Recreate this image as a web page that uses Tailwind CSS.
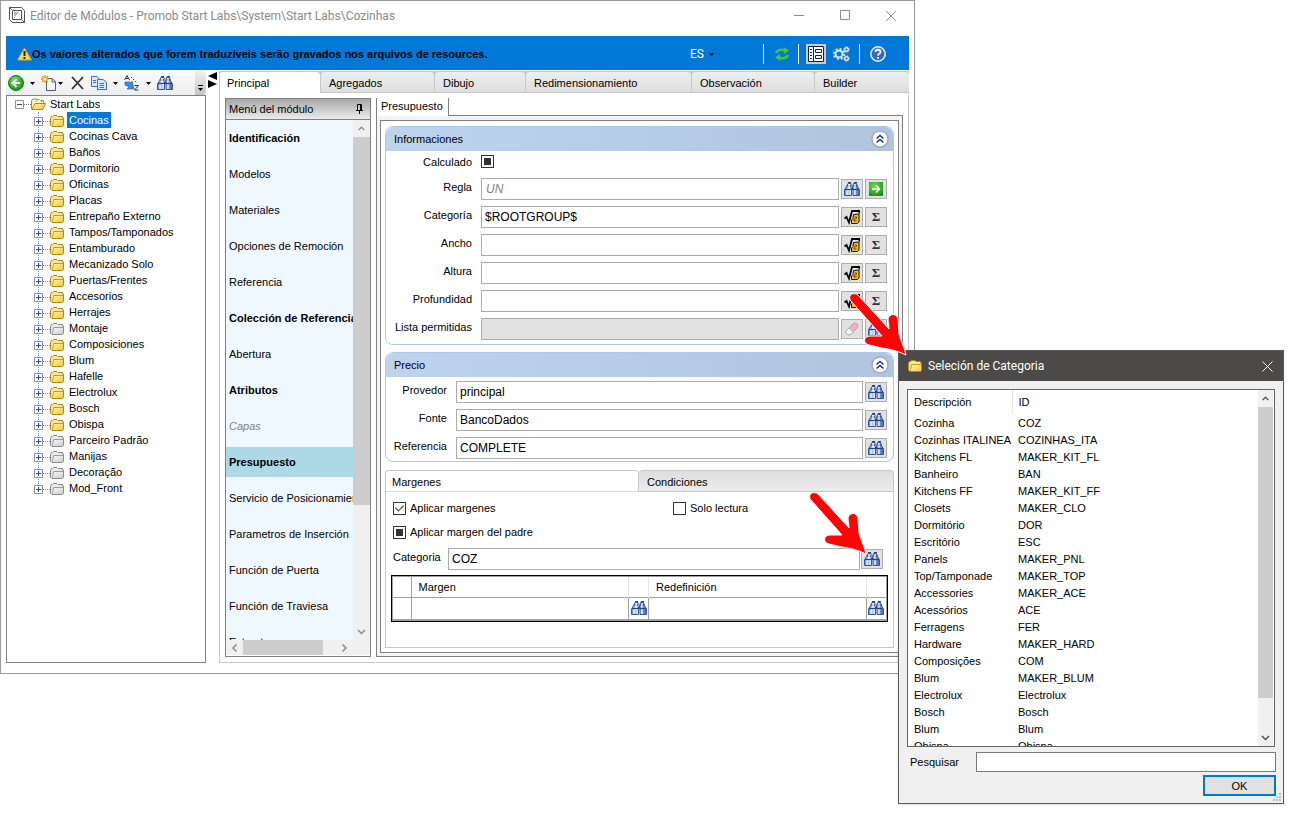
<!DOCTYPE html>
<html lang="es">
<head>
    <meta charset="UTF-8">
    <meta name="viewport" content="width=device-width, initial-scale=1.0">
    <title>Editor de Módulos</title>
    <script src="https://cdn.jsdelivr.net/npm/@tailwindcss/browser@4"></script>
</head>
<body class="relative min-h-screen overflow-hidden bg-white font-['Liberation_Sans',Arial,sans-serif] text-[11px] leading-4 text-black">

    <!-- Iconos -->
    <svg class="absolute h-0 w-0">
        <defs>
            <linearGradient id="gFolder" x1="0" y1="0" x2="1" y2="1">
                <stop offset="0" stop-color="#fff6a0"/><stop offset="1" stop-color="#f8c14e"/>
            </linearGradient>
            <linearGradient id="gGray" x1="0" y1="0" x2="1" y2="1">
                <stop offset="0" stop-color="#f4f4f4"/><stop offset="1" stop-color="#cfcfcf"/>
            </linearGradient>
            <linearGradient id="gBlue" x1="0" y1="0" x2="1" y2="0">
                <stop offset="0" stop-color="#5f86c8"/><stop offset=".4" stop-color="#dbe7f8"/><stop offset="1" stop-color="#3a5fa6"/>
            </linearGradient>
            <radialGradient id="gGreen" cx=".4" cy=".3" r=".8">
                <stop offset="0" stop-color="#6fdc5a"/><stop offset="1" stop-color="#138a12"/>
            </radialGradient>
        </defs>
        <symbol id="folder" viewBox="0 0 14 12">
            <path d="M.5 10V3L1.500 1.500H2.500L3.500 .5H7L8 1.500H12.500V3H13.500V10.500L12.500 11.500H2Z" fill="#fbe98a" stroke="#b58a10"/>
            <path d="M3.500 4.500H13M3.500 4.500L2.500 10.500" stroke="#c79a1c" fill="none"/>
            <rect x="4" y="5" width="9" height="6" fill="url(#gFolder)"/>
        </symbol>
        <symbol id="folder-gray" viewBox="0 0 14 12">
            <path d="M.5 10V3L1.500 1.500H2.500L3.500 .5H7L8 1.500H12.500V3H13.500V10.500L12.500 11.500H2Z" fill="#e9e9e9" stroke="#8c8c8c"/>
            <path d="M3.500 4.500H13M3.500 4.500L2.500 10.500" stroke="#9a9a9a" fill="none"/>
            <rect x="4" y="5" width="9" height="6" fill="url(#gGray)"/>
        </symbol>
        <symbol id="binoculars" viewBox="0 0 16 14">
            <path d="M4 1.500H7V5L7.500 8V13.500H.5V8L2.500 4.500ZM9.500 1.500H12.500L13.500 4.500L15.500 8V13.500H9V8L8.500 5Z" fill="url(#gBlue)" stroke="#34589c"/>
            <path d="M4 .5H7M10 .5H13M3 4H7M9 4H13.500M1 7.500H7M9 7.500H15" stroke="#24437f"/>
            <path d="M7 7H9.500" stroke="#24437f" stroke-width="2"/>
            <path d="M3 8.500V13M11 8.500V13M5 2V6.500M11 2V6.500" stroke="#fff" stroke-width="1.200"/>
        </symbol>
        <symbol id="root" viewBox="0 0 16 16">
            <path d="M.5 9.500L2.500 8L5 13.500L8 2H15.500V4.500" fill="none" stroke="#000" stroke-width="1.800"/>
            <path d="M9.500 5.500L15 5V13L13.500 14.500H7.500V11L9 9.500Z" fill="#f9b81c" stroke="#000" stroke-width=".9"/>
            <path d="M10.500 8H12.500V9.500L10 10.500V12H12.500" fill="none" stroke="#5a3c00" stroke-width=".9"/>
        </symbol>
        <symbol id="chevrons" viewBox="0 0 18 18">
            <circle cx="9" cy="9" r="8" fill="#fff" stroke="#a3a8bd" stroke-width="1.500"/>
            <path d="M5.500 8.500L9 5.500L12.500 8.500M5.500 12.500L9 9.500L12.500 12.500" fill="none" stroke="#1d2f6b" stroke-width="1.500"/>
        </symbol>
        <symbol id="caret" viewBox="0 0 5 3"><path d="M0 0H5L2.500 3Z" fill="#000"/></symbol>
        <symbol id="chev" viewBox="0 0 9 6"><path d="M1 5L4.500 1.500L8 5" fill="none" stroke="currentColor" stroke-width="1.500"/></symbol>
        <symbol id="pointer" viewBox="0 0 64 68">
            <path d="M2 9C0 3 6 1 10 4L41 38C41 34 40 31 40 28C41 22 49 22 50 28L51 43C53 51 57 58 58 64C50 60 42 58 34 57L21 54C14 52 16 45 22 45H34Z" fill="#fe0505" stroke="#fff"/>
        </symbol>
    </svg>

    <!-- Ventana principal -->
    <main class="mr-[387px] border border-[#9b9b9b] bg-white px-[5px] pb-[10px]">
        <header class="flex h-[35px] items-start pl-[3px] pt-[6px] font-[Roboto,'Open_Sans',sans-serif] text-[12px] leading-[18px] text-[#8a8a8a]">
            <svg class="mr-[5px] size-4" viewBox="0 0 16 16" fill="none" stroke="#555">
                <path d="M.5 .5H12.500L15.500 3.500V15.500H3.500L.5 12.500Z"/><path d="M3.500 3.500H12.500V12.500H3.500ZM.5 .5L3.500 3.500M12.500 12.500L15.500 15.500"/><path d="M5 5H10L5 11Z" fill="#b9b9b9" stroke="none"/>
            </svg>
            <h1 class="grow whitespace-nowrap">Editor de Módulos - Promob Start Labs\System\Start Labs\Cozinhas</h1>
            <div class="flex gap-[34px] pr-[12px] pt-[3px]">
                <button type="button" aria-label="Minimizar"><svg class="h-[12px] w-[12px]" viewBox="0 0 12 12" stroke="#8a8a8a"><path d="M1 5.500H11"/></svg></button>
                <button type="button" aria-label="Maximizar"><svg class="h-[12px] w-[12px]" viewBox="0 0 12 12" fill="none" stroke="#8a8a8a"><path d="M1.500 .5H10.500V9.500H1.500Z"/></svg></button>
                <button type="button" aria-label="Cerrar"><svg class="h-[12px] w-[12px]" viewBox="0 0 12 12" stroke="#8a8a8a"><path d="M1 1L11 11M11 1L1 11"/></svg></button>
            </div>
        </header>

        <!-- Barra de aviso -->
        <div class="flex h-[34px] items-center bg-[#0078d7] pl-[11px] pr-[23px] pt-[2px]">
            <svg class="h-[14px] w-[15px] shrink-0" viewBox="0 0 15 14">
                <path d="M7.500 1L14.500 13H.5Z" fill="#fbd84b" stroke="#c4a545"/>
                <path d="M7.500 4V9" stroke="#222" stroke-width="2"/><path d="M7.500 10V12" stroke="#222" stroke-width="2"/>
            </svg>
            <p class="grow whitespace-nowrap font-bold">Os valores alterados que forem traduzíveis serão gravados nos arquivos de resources.</p>
            <div class="mr-[49px] flex items-center gap-[4px]">
                <select aria-label="Idioma" class="w-[15px] appearance-none font-[Roboto,sans-serif] text-[12px] text-white">
                    <option>ES</option>
                </select>
                <svg class="h-[3px] w-[5px]"><use href="#caret"/></svg>
            </div>
            <span class="mr-[10px] h-[20px] w-px bg-white"></span>
            <button type="button" class="mr-[8px]" aria-label="Actualizar">
                <svg class="size-4" viewBox="0 0 16 16" fill="none" stroke="#49c42c" stroke-width="2.500">
                    <path d="M2 7C3 4 7 3 11 4.500"/><path d="M9.500 1L15 4.500L10 8Z" fill="#49c42c" stroke="none"/>
                    <path d="M14 9C13 12 9 13 5 11.500"/><path d="M6.500 15L1 11.500L6 8Z" fill="#49c42c" stroke="none"/>
                </svg>
            </button>
            <span class="mr-[7px] h-[20px] w-px bg-white"></span>
            <button type="button" class="mr-[7px] grid size-[20px] place-items-center bg-[#c5cbd8]" aria-label="Vista">
                <svg class="size-4" viewBox="0 0 16 16" fill="none" stroke="#222">
                    <path d="M.5 .5H15.500V15.500H.5Z" fill="#fff"/><path d="M5.500 .5V15.500M2 3.500H4M2 6.500H4M2 9.500H4M2 12.500H4M7.500 3.500H13.500V6.500H7.500ZM7.500 9.500H13.500V12.500H7.500Z"/>
                </svg>
            </button>
            <button type="button" class="mr-[9px]" aria-label="Opciones">
                <svg class="h-[16px] w-[17px]" viewBox="0 0 17 16" fill="none" stroke="#dfe6ee">
                    <circle cx="6" cy="8" r="3.500" stroke-width="2"/><circle cx="6" cy="8" r="5.200" stroke-width="1.800" stroke-dasharray="2 2.080"/>
                    <circle cx="13.500" cy="3.500" r="1.800" stroke-width="1.400"/><circle cx="13.500" cy="3.500" r="2.800" stroke-dasharray="1 1.200"/>
                    <circle cx="13.500" cy="12.500" r="1.800" stroke-width="1.400"/><circle cx="13.500" cy="12.500" r="2.800" stroke-dasharray="1 1.200"/>
                </svg>
            </button>
            <span class="mr-[10px] h-[20px] w-px bg-white"></span>
            <button type="button" aria-label="Ayuda">
                <svg class="size-4" viewBox="0 0 16 16" fill="none">
                    <circle cx="8" cy="8" r="7.200" fill="#3668c9" stroke="#eef3ff" stroke-width="1.500"/>
                    <path d="M5.500 6C5.500 3 10.500 3 10.500 6C10.500 7.500 8 7.800 8 9.500M8 11V12.800" stroke="#fff" stroke-width="1.800"/>
                </svg>
            </button>
        </div>

        <div class="flex pt-px">
            <!-- Columna del árbol -->
            <aside class="flex w-[200px] shrink-0 flex-col">
                <div class="flex h-[24px] items-center rounded-r bg-linear-to-b from-[#fafafa] to-[#eeeeee] pl-[2px]">
                    <button type="button" aria-label="Volver">
                        <svg class="size-4" viewBox="0 0 16 16"><circle cx="8" cy="8" r="7.500" fill="url(#gGreen)" stroke="#0f7a10"/><path d="M8.500 4L4.500 8L8.500 12M5 8H12" fill="none" stroke="#fff" stroke-width="2"/></svg>
                    </button>
                    <svg class="mx-[6px] h-[3px] w-[5px]"><use href="#caret"/></svg>
                    <button type="button" aria-label="Nuevo">
                        <svg class="size-4" viewBox="0 0 16 16"><path d="M5.500 3.500H11L14.500 6.500V15.500H5.500Z" fill="#f4f8ff" stroke="#4a5f86"/><path d="M11 3.500V7H14.500" fill="none" stroke="#4a5f86"/><path d="M4 0V8M0 4H8M1 1L7 7M7 1L1 7" stroke="#e59a15" stroke-width="1.300"/><circle cx="4" cy="4" r="1.600" fill="#fff3b0"/></svg>
                    </button>
                    <svg class="ml-px mr-[8px] h-[3px] w-[5px]"><use href="#caret"/></svg>
                    <button type="button" aria-label="Eliminar">
                        <svg class="h-[14px] w-[13px]" viewBox="0 0 13 14" stroke="#333" stroke-width="1.800" fill="none"><path d="M1 1L12 13M12 1L1 13"/></svg>
                    </button>
                    <button type="button" class="ml-[7px]" aria-label="Copiar">
                        <svg class="size-4" viewBox="0 0 16 16" fill="#dbe8fb" stroke="#3f6db8"><path d="M.5 1.500H6L8.500 4V11.500H.5Z"/><path d="M6.500 4.500H12L15.500 7.500V14.500H6.500Z"/><path d="M2 5.500H5M2 7.500H5M8.500 8.500H13M8.500 10.500H13M8.500 12.500H13"/></svg>
                    </button>
                    <svg class="mx-[6px] h-[3px] w-[5px]"><use href="#caret"/></svg>
                    <button type="button" aria-label="Ordenar">
                        <svg class="size-4" viewBox="0 0 16 16" fill="none" stroke="#333"><path d="M.5 5L3 0.500L5.500 5M1.500 3.500H4.500M10.500 10.500H14.500L10.500 15H14.500"/><path d="M7 2L12 7" stroke-dasharray="1.500 1.500"/><path d="M1 7H6L8 8V6L10 14H3L5 12L1 10Z" fill="#3c8ddb" stroke="#1f5ca8" stroke-width=".6"/></svg>
                    </button>
                    <svg class="mx-[6px] h-[3px] w-[5px]"><use href="#caret"/></svg>
                    <button type="button" aria-label="Buscar"><svg class="h-[14px] w-4"><use href="#binoculars"/></svg></button>
                    <button type="button" class="ml-auto grid h-[24px] w-[11px] place-items-end justify-center rounded-r bg-linear-to-b from-[#f0f0f0] to-[#c4c4c4] pb-[4px]" aria-label="Más">
                        <svg class="h-[6px] w-[5px]" viewBox="0 0 5 6"><path d="M0 .5H5" stroke="#000"/><path d="M0 3H5L2.500 6Z"/></svg>
                    </button>
                </div>
                <div class="grow border border-[#7d8290]">
                    <div class="flex h-4 items-center pl-2">
                        <svg class="h-[9px] w-[9px]" viewBox="0 0 9 9"><path d="M.5 .5H8.500V8.500H.5Z" fill="#fff" stroke="#919191"/><path d="M2 4.500H7" stroke="#2b4b9b"/></svg>
                        <span class="w-[7px] border-t border-dotted border-[#808080]"></span>
                        <svg class="mr-[4px] h-[12px] w-[15px]" viewBox="0 0 15 12"><path d="M.5 11V2.500L2 1H6L7 2.500H12.500V5" fill="#fff3b5" stroke="#b58a10"/><path d="M5 4L8 1L11 4" fill="#fff" stroke="#9aa3b5"/><path d="M1 11.500L4 5.500H14.500L12 11.500Z" fill="url(#gFolder)" stroke="#b58a10"/></svg>
                        <span>Start Labs</span>
                    </div>
                    <ul id="tree" class="relative before:absolute before:bottom-2 before:left-[31px] before:top-0 before:border-l before:border-dotted before:border-[#808080]"></ul>
                </div>
            </aside>

            <div class="flex w-[13px] shrink-0 flex-col items-center pt-px">
                <svg class="h-[8px] w-[9px]" viewBox="0 0 9 8"><path d="M9 0V8L0 4Z"/></svg>
                <svg class="h-[8px] w-[9px]" viewBox="0 0 9 8"><path d="M0 0V8L9 4Z"/></svg>
            </div>

            <section class="min-w-0 grow">
                <!-- Pestañas -->
                <nav class="flex h-[22px] gap-px bg-[#c8c8c8] leading-[22px]">
                    <a href="#" class="w-[101px] rounded-t-sm border-l border-t border-[#c8c8c8] bg-white pl-[7px]">Principal</a>
                    <a href="#" class="w-[113px] rounded-t-sm border-b border-t border-[#c8c8c8] bg-linear-to-b from-[#eeeeee] to-[#dedede] pl-[8px]">Agregados</a>
                    <a href="#" class="w-[90px] rounded-t-sm border-b border-t border-[#c8c8c8] bg-linear-to-b from-[#eeeeee] to-[#dedede] pl-[8px]">Dibujo</a>
                    <a href="#" class="w-[165px] rounded-t-sm border-b border-t border-[#c8c8c8] bg-linear-to-b from-[#eeeeee] to-[#dedede] pl-[8px]">Redimensionamiento</a>
                    <a href="#" class="w-[122px] rounded-t-sm border-b border-t border-[#c8c8c8] bg-linear-to-b from-[#eeeeee] to-[#dedede] pl-[8px]">Observación</a>
                    <a href="#" class="grow rounded-t-sm border-b border-t border-[#c8c8c8] bg-linear-to-b from-[#eeeeee] to-[#dedede] pl-[8px]">Builder</a>
                </nav>

                <div class="flex gap-[5px] border border-t-0 border-[#c8c8c8] p-[5px]">
                    <!-- Menú del módulo -->
                    <div class="w-[146px] shrink-0 border border-[#808080]">
                        <div class="flex h-[21px] items-center justify-between border-b border-[#808080] bg-linear-to-b from-[#a8a8a8] to-[#ececec] pl-[3px] pr-[7px]">
                            <span>Menú del módulo</span>
                            <svg class="h-[10px] w-[7px]" viewBox="0 0 7 10"><path d="M1.500 6V.5H5.500V6M0 6.500H7M3.500 7V10" fill="none" stroke="#000"/><path d="M4 1H6V6H4Z"/></svg>
                        </div>
                        <div class="grid grid-cols-[1fr_17px]">
                            <ul id="menu" class="h-[520px] overflow-hidden whitespace-nowrap bg-[#f0f8ff]"></ul>
                            <div class="flex flex-col items-center bg-[#f0f0f0] text-[#8a8a8a]">
                                <svg class="my-[6px] h-[5px] w-[9px] shrink-0"><use href="#chev"/></svg>
                                <div class="h-[368px] w-full bg-[#cdcdcd]"></div>
                                <svg class="mb-[5px] mt-auto h-[6px] w-[9px] rotate-180"><use href="#chev"/></svg>
                            </div>
                            <div class="flex h-[15px] items-center bg-[#f0f0f0] text-[#8a8a8a]">
                                <svg class="mx-[4px] h-[6px] w-[9px] -rotate-90"><use href="#chev"/></svg>
                                <div class="h-full w-[80px] bg-[#cdcdcd]"></div>
                                <svg class="ml-auto mr-[4px] h-[6px] w-[9px] rotate-90"><use href="#chev"/></svg>
                            </div>
                            <div class="bg-[#f0f0f0]"></div>
                        </div>
                    </div>

                    <!-- Presupuesto -->
                    <div class="flex min-w-0 grow flex-col">
                        <div class="flex h-[18px]">
                            <a href="#" class="w-[73px] border-x border-[#808080] pl-[4px]">Presupuesto</a>
                            <span class="grow border-b border-[#808080]"></span>
                        </div>
                        <div class="grow border border-t-0 border-[#808080] bg-[#f3f3f3] p-[3px] pt-[4px]">
                            <div class="h-full border border-[#808080] bg-white p-[4px] pt-[5px]">

                                <fieldset class="mb-[7px] overflow-hidden rounded-lg border border-[#a9cbe9]">
                                    <div class="flex h-[24px] items-center justify-between bg-linear-to-r from-[#bdd3ee] to-[#b0c4de] pl-[8px] pr-[4px]">
                                        <h2>Informaciones</h2>
                                        <button type="button" aria-label="Contraer"><svg class="size-[18px]"><use href="#chevrons"/></svg></button>
                                    </div>
                                    <div class="grid grid-cols-[86px_1fr_22px_22px] gap-x-[2px] gap-y-[6px] pb-[4px] pr-[6px]">
                                        <label for="calc" class="pt-[3px] text-right">Calculado</label>
                                        <div class="col-span-3 flex h-[21px] items-center pl-[7px]">
                                            <input id="calc" type="checkbox" class="grid size-[13px] appearance-none place-items-center border border-[#333] bg-white before:size-[7px] before:bg-[#333]">
                                        </div>

                                        <label for="regla" class="pt-px text-right">Regla</label>
                                        <div class="pl-[7px]"><input id="regla" type="text" value="UN" class="h-[22px] w-full border border-[#ababab] px-[4px] text-[12px] italic text-[#808080]"></div>
                                        <button type="button" aria-label="Buscar regla" class="grid h-[20px] place-items-center self-center border border-[#adadad] bg-[#e1e1e1]"><svg class="h-[14px] w-4"><use href="#binoculars"/></svg></button>
                                        <button type="button" aria-label="Ir" class="grid h-[20px] place-items-center self-center border border-[#adadad] bg-[#e1e1e1]">
                                            <svg class="size-[14px]" viewBox="0 0 14 14"><path d="M0 0H14V14H0Z" fill="url(#gGreen)"/><path d="M3 7H10.500M7 3.500L10.500 7L7 10.500" fill="none" stroke="#fff" stroke-width="1.500"/></svg>
                                        </button>

                                        <label for="cat" class="pt-px text-right">Categoría</label>
                                        <div class="pl-[7px]"><input id="cat" type="text" value="$ROOTGROUP$" class="h-[22px] w-full border border-[#ababab] px-[3px] text-[12px]"></div>
                                        <button type="button" aria-label="Fórmula" class="grid h-[20px] place-items-center self-center border border-[#adadad] bg-[#e1e1e1]"><svg class="size-4"><use href="#root"/></svg></button>
                                        <button type="button" class="h-[20px] self-center border border-[#adadad] bg-[#e1e1e1] font-['Liberation_Serif',serif] text-[13px] font-bold text-[#333]">Σ</button>

                                        <label for="ancho" class="pt-px text-right">Ancho</label>
                                        <div class="pl-[7px]"><input id="ancho" type="text" class="h-[22px] w-full border border-[#ababab] px-[3px] text-[12px]"></div>
                                        <button type="button" aria-label="Fórmula" class="grid h-[20px] place-items-center self-center border border-[#adadad] bg-[#e1e1e1]"><svg class="size-4"><use href="#root"/></svg></button>
                                        <button type="button" class="h-[20px] self-center border border-[#adadad] bg-[#e1e1e1] font-['Liberation_Serif',serif] text-[13px] font-bold text-[#333]">Σ</button>

                                        <label for="altura" class="pt-px text-right">Altura</label>
                                        <div class="pl-[7px]"><input id="altura" type="text" class="h-[22px] w-full border border-[#ababab] px-[3px] text-[12px]"></div>
                                        <button type="button" aria-label="Fórmula" class="grid h-[20px] place-items-center self-center border border-[#adadad] bg-[#e1e1e1]"><svg class="size-4"><use href="#root"/></svg></button>
                                        <button type="button" class="h-[20px] self-center border border-[#adadad] bg-[#e1e1e1] font-['Liberation_Serif',serif] text-[13px] font-bold text-[#333]">Σ</button>

                                        <label for="prof" class="pt-px text-right">Profundidad</label>
                                        <div class="pl-[7px]"><input id="prof" type="text" class="h-[22px] w-full border border-[#ababab] px-[3px] text-[12px]"></div>
                                        <button type="button" aria-label="Fórmula" class="grid h-[20px] place-items-center self-center border border-[#adadad] bg-[#e1e1e1]"><svg class="size-4"><use href="#root"/></svg></button>
                                        <button type="button" class="h-[20px] self-center border border-[#adadad] bg-[#e1e1e1] font-['Liberation_Serif',serif] text-[13px] font-bold text-[#333]">Σ</button>

                                        <label for="lista" class="whitespace-nowrap pt-px text-right">Lista permitidas</label>
                                        <div class="pl-[7px]"><input id="lista" type="text" disabled class="h-[22px] w-full border border-[#ababab] bg-[#e1e1e1]"></div>
                                        <button type="button" aria-label="Borrar" class="grid h-[20px] place-items-center self-center border border-[#adadad] bg-[#e1e1e1]">
                                            <svg class="size-[14px]" viewBox="0 0 14 14"><path d="M1 9L8 2Q10 0 12 2Q14 4 12 6L5.500 12.500Q4 13.500 2 12Q0 10.500 1 9Z" fill="#f2b3bb" stroke="#b9a0a5"/><path d="M1 9L4 6L8.500 10L5.500 12.500Q4 13.500 2 12Q0 10.500 1 9Z" fill="#fff" stroke="#aaa"/></svg>
                                        </button>
                                        <button type="button" aria-label="Buscar lista" class="grid h-[20px] place-items-center self-center border border-[#adadad] bg-[#e1e1e1]"><svg class="h-[14px] w-4"><use href="#binoculars"/></svg></button>
                                    </div>
                                </fieldset>

                                <fieldset class="mb-[8px] overflow-hidden rounded-lg border border-[#a9cbe9]">
                                    <div class="flex h-[24px] items-center justify-between bg-linear-to-r from-[#bdd3ee] to-[#b0c4de] pl-[8px] pr-[4px]">
                                        <h2>Precio</h2>
                                        <button type="button" aria-label="Contraer"><svg class="size-[18px]"><use href="#chevrons"/></svg></button>
                                    </div>
                                    <div class="grid grid-cols-[61px_1fr_22px] gap-x-[2px] gap-y-[6px] pb-[2px] pr-[6px] pt-[4px]">
                                        <label for="prov" class="pt-px text-right">Provedor</label>
                                        <div class="pl-[7px]"><input id="prov" type="text" value="principal" class="h-[22px] w-full border border-[#ababab] px-[3px] text-[12px]"></div>
                                        <button type="button" aria-label="Buscar proveedor" class="grid h-[20px] place-items-center self-center border border-[#adadad] bg-[#e1e1e1]"><svg class="h-[14px] w-4"><use href="#binoculars"/></svg></button>
                                        <label for="fonte" class="pt-px text-right">Fonte</label>
                                        <div class="pl-[7px]"><input id="fonte" type="text" value="BancoDados" class="h-[22px] w-full border border-[#ababab] px-[3px] text-[12px]"></div>
                                        <button type="button" aria-label="Buscar fuente" class="grid h-[20px] place-items-center self-center border border-[#adadad] bg-[#e1e1e1]"><svg class="h-[14px] w-4"><use href="#binoculars"/></svg></button>
                                        <label for="ref" class="pt-px text-right">Referencia</label>
                                        <div class="pl-[7px]"><input id="ref" type="text" value="COMPLETE" class="h-[22px] w-full border border-[#ababab] px-[3px] text-[12px]"></div>
                                        <button type="button" aria-label="Buscar referencia" class="grid h-[20px] place-items-center self-center border border-[#adadad] bg-[#e1e1e1]"><svg class="h-[14px] w-4"><use href="#binoculars"/></svg></button>
                                    </div>
                                </fieldset>

                                <!-- Margenes / Condiciones -->
                                <div class="flex h-[22px] leading-[22px]">
                                    <a href="#" class="flex-1 rounded-t border border-b-[#dcdcdc] border-[#c8c8c8] pl-[6px]">Margenes</a>
                                    <a href="#" class="flex-1 rounded-t border border-l-0 border-[#c8c8c8] bg-linear-to-b from-[#dedede] to-[#ececec] pl-[8px]">Condiciones</a>
                                </div>
                                <div class="border border-t-0 border-[#c8c8c8] px-[5px] pb-[25px] pt-[4px]">
                                    <div class="grid grid-cols-[280px_1fr] pl-[2px]">
                                        <label class="flex h-[24px] items-center gap-[4px]">
                                            <input type="checkbox" checked class="flex size-[13px] appearance-none justify-center border border-[#333] bg-white before:h-[8px] before:w-[5px] before:rotate-45 before:border-b before:border-r before:border-[#333]">Aplicar margenes
                                        </label>
                                        <label class="flex h-[24px] items-center gap-[4px]">
                                            <input type="checkbox" class="size-[13px] appearance-none border border-[#333] bg-white">Solo lectura
                                        </label>
                                        <label class="flex h-[24px] items-center gap-[4px]">
                                            <input type="checkbox" class="grid size-[13px] appearance-none place-items-center border border-[#333] bg-white before:size-[7px] before:bg-[#333]">Aplicar margen del padre
                                        </label>
                                    </div>
                                    <div class="mb-[5px] mt-[4px] flex pl-[2px] pr-[5px]">
                                        <label for="mcat" class="w-[55px] shrink-0 pt-px">Categoria</label>
                                        <input id="mcat" type="text" value="COZ" class="mr-px h-[22px] min-w-0 grow border border-[#ababab] px-[3px] text-[12px]">
                                        <button type="button" aria-label="Buscar categoria" class="grid h-[20px] w-[22px] place-items-center self-center border border-[#adadad] bg-[#e1e1e1]"><svg class="h-[14px] w-4"><use href="#binoculars"/></svg></button>
                                    </div>
                                    <div class="border border-black bg-[#a0a0a0] p-px pb-[2px]">
                                        <table class="w-full table-fixed border-collapse bg-white text-left">
                                            <colgroup><col class="w-[18px]"><col><col class="w-[20px]"><col><col class="w-[20px]"></colgroup>
                                            <thead>
                                                <tr class="h-[20px]">
                                                    <th class="border-r border-[#a0a0a0]"></th>
                                                    <th class="pl-[7px] font-normal">Margen</th>
                                                    <th class="border-x border-[#e5e5e5]"></th>
                                                    <th class="pl-[7px] font-normal">Redefinición</th>
                                                    <th class="border-l border-[#e5e5e5]"></th>
                                                </tr>
                                            </thead>
                                            <tbody>
                                                <tr class="h-[22px]">
                                                    <td class="border-r border-t border-[#a0a0a0]"></td>
                                                    <td class="border-r border-t border-[#a0a0a0]"></td>
                                                    <td class="border-r border-t border-[#a0a0a0]"><button type="button" aria-label="Buscar margen" class="mx-auto block"><svg class="h-[14px] w-4"><use href="#binoculars"/></svg></button></td>
                                                    <td class="border-r border-t border-[#a0a0a0]"></td>
                                                    <td class="border-t border-[#a0a0a0]"><button type="button" aria-label="Buscar redefinición" class="mx-auto block"><svg class="h-[14px] w-4"><use href="#binoculars"/></svg></button></td>
                                                </tr>
                                            </tbody>
                                        </table>
                                    </div>
                                </div>
                            </div>
                        </div>
                    </div>
                </div>
            </section>
        </div>
    </main>

    <!-- Diálogo de categoría -->
    <div role="dialog" aria-labelledby="dlgTitle" class="absolute right-[18px] top-[350px] w-[386px] border border-[#5a5a5a] bg-[#f0f0f0] shadow-sm">
        <header class="flex h-[30px] items-center bg-[#4c4a48] pl-[9px] pr-[10px] font-[Roboto,'Open_Sans',sans-serif] text-[12px] text-white">
            <svg class="mr-[6px] h-[12px] w-[14px]"><use href="#folder"/></svg>
            <h2 id="dlgTitle" class="grow">Seleción de Categoria</h2>
            <button type="button" aria-label="Cerrar"><svg class="h-[11px] w-[11px]" viewBox="0 0 11 11" stroke="#fff"><path d="M.5 .5L10.500 10.500M10.500 .5L.5 10.500"/></svg></button>
        </header>
        <div class="px-[7px] pb-[7px] pt-[8px]">
            <div class="mx-px flex h-[358px] overflow-hidden border border-[#646464] bg-white">
                <div class="min-w-0 grow overflow-hidden">
                    <table class="w-full table-fixed whitespace-nowrap text-left">
                        <thead>
                            <tr class="h-[24px]">
                                <th class="w-[104px] border-r border-[#e5e5e5] pl-[6px] font-normal">Descripción</th>
                                <th class="pl-[6px] font-normal">ID</th>
                            </tr>
                        </thead>
                        <tbody id="cats"></tbody>
                    </table>
                </div>
                <div class="mr-px flex w-[15px] shrink-0 flex-col items-center bg-[#f0f0f0] text-[#505050]">
                    <svg class="my-[6px] h-[5px] w-[9px] shrink-0"><use href="#chev"/></svg>
                    <div class="h-[291px] w-full bg-[#cdcdcd]"></div>
                    <svg class="mb-[5px] mt-auto h-[6px] w-[9px] rotate-180"><use href="#chev"/></svg>
                </div>
            </div>
            <div class="mb-[3px] mt-[5px] flex items-center pl-[4px]">
                <label for="search" class="w-[66px] shrink-0">Pesquisar</label>
                <input id="search" type="text" class="h-[20px] min-w-0 grow border border-[#7a7a7a] bg-white px-1">
            </div>
            <button type="button" class="ml-auto block h-[21px] w-[73px] border-2 border-[#0078d7] bg-[#e1e1e1] text-[11px]">OK</button>
        </div>
        <svg class="absolute bottom-[2px] right-[2px] h-[8px] w-[8px]" viewBox="0 0 8 8" fill="#bfbfbf"><path d="M6 0H8V2H6ZM6 3H8V5H6ZM3 3H5V5H3ZM6 6H8V8H6ZM3 6H5V8H3ZM0 6H2V8H0Z"/></svg>
    </div>

    <!-- Flechas rojas -->
    <svg class="pointer-events-none absolute right-[390px] top-[291px] h-[68px] w-[64px]"><use href="#pointer"/></svg>
    <svg class="pointer-events-none absolute right-[430px] top-[490px] h-[68px] w-[64px]"><use href="#pointer"/></svg>

    <script>
        const folders = ['Cocinas', 'Cocinas Cava', 'Baños', 'Dormitorio', 'Oficinas', 'Placas', 'Entrepaño Externo',
            'Tampos/Tamponados', 'Entamburado', 'Mecanizado Solo', 'Puertas/Frentes', 'Accesorios', 'Herrajes', 'Montaje',
            'Composiciones', 'Blum', 'Hafelle', 'Electrolux', 'Bosch', 'Obispa', 'Parceiro Padrão', 'Manijas', 'Decoração', 'Mod_Front'];
        const grayFolders = ['Montaje', 'Parceiro Padrão', 'Manijas', 'Decoração', 'Mod_Front'];

        document.getElementById('tree').innerHTML = folders.map((name, i) => `
            <li class="relative flex h-4 items-center pl-[27px]">
                <svg class="mt-[2px] h-[9px] w-[9px]" viewBox="0 0 9 9"><path d="M.5 .5H8.500V8.500H.5Z" fill="#fff" stroke="#919191"/><path d="M2 4.500H7M4.500 2V7" stroke="#2b4b9b"/></svg>
                <span class="mt-[2px] w-[7px] border-t border-dotted border-[#808080]"></span>
                <svg class="mr-[3px] mt-[2px] h-[12px] w-[14px]"><use href="${grayFolders.includes(name) ? '#folder-gray' : '#folder'}"/></svg>
                <span class="${i === 0 ? 'bg-[#0078d7] px-[2px] text-white' : 'px-[2px]'}">${name}</span>
            </li>`).join('');

        // Menú del módulo
        const menu = [['Identificación', 'b'], ['Modelos'], ['Materiales'], ['Opciones de Remoción'], ['Referencia'],
            ['Colección de Referencias', 'b'], ['Abertura'], ['Atributos', 'b'], ['Capas', 'i'], ['Presupuesto', 's'],
            ['Servicio de Posicionamiento'], ['Parametros de Inserción'], ['Función de Puerta'], ['Función de Traviesa'], ['Estructura']];
        const menuStyles = {
            b: 'font-bold',
            i: 'italic text-[#808080]',
            s: 'bg-[#add8e6] font-bold'
        };
        document.getElementById('menu').innerHTML = menu.map(([name, kind]) => `
            <li class="py-[3px]"><a href="#" class="block h-[30px] pl-[3px] leading-[30px] ${menuStyles[kind] || ''}">${name}</a></li>`).join('');

        // Categorías
        const cats = [['Cozinha', 'COZ'], ['Cozinhas ITALINEA', 'COZINHAS_ITA'], ['Kitchens FL', 'MAKER_KIT_FL'], ['Banheiro', 'BAN'],
            ['Kitchens FF', 'MAKER_KIT_FF'], ['Closets', 'MAKER_CLO'], ['Dormitório', 'DOR'], ['Escritório', 'ESC'],
            ['Panels', 'MAKER_PNL'], ['Top/Tamponade', 'MAKER_TOP'], ['Accessories', 'MAKER_ACE'], ['Acessórios', 'ACE'],
            ['Ferragens', 'FER'], ['Hardware', 'MAKER_HARD'], ['Composições', 'COM'], ['Blum', 'MAKER_BLUM'],
            ['Electrolux', 'Electrolux'], ['Bosch', 'Bosch'], ['Blum', 'Blum'], ['Obispa', 'Obispa']];
        document.getElementById('cats').innerHTML = cats.map(([name, id]) => `
            <tr class="h-[17px]"><td class="pl-[6px]">${name}</td><td class="pl-[6px]">${id}</td></tr>`).join('');
    </script>
</body>
</html>
